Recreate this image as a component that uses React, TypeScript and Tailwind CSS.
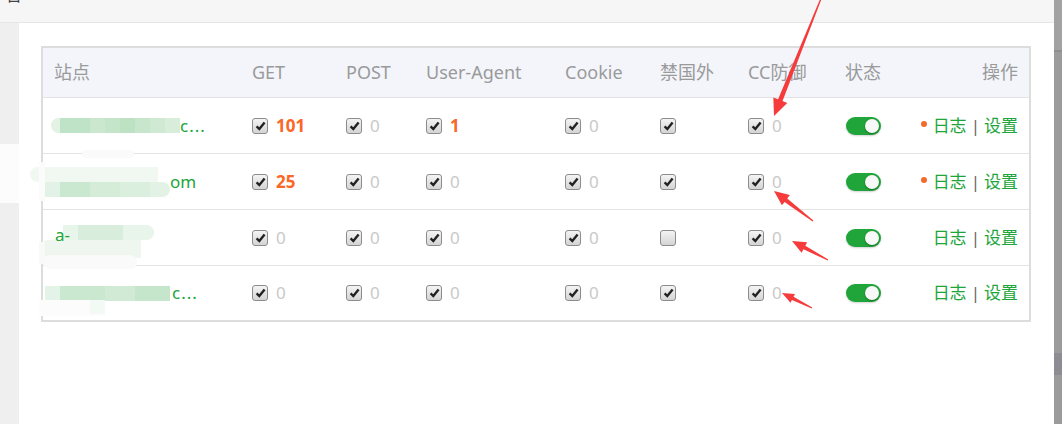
import React from "react";

type Strip = [number, string][];

const cols = "grid grid-cols-[199px_94px_80px_139px_95px_88px_97px_75px_1fr]";

interface Site {
  get: number;
  post: number;
  ua: number;
  cookie: number;
  foreign: boolean;
  cc: number;
  dot: boolean;
}

const sites: Site[] = [
  { get: 101, post: 0, ua: 1, cookie: 0, foreign: true, cc: 0, dot: true },
  { get: 25, post: 0, ua: 0, cookie: 0, foreign: true, cc: 0, dot: true },
  { get: 0, post: 0, ua: 0, cookie: 0, foreign: false, cc: 0, dot: false },
  { get: 0, post: 0, ua: 0, cookie: 0, foreign: true, cc: 0, dot: false },
];

function Check({ on = true }: { on?: boolean }) {
  return (
    <span className="inline-flex w-[16px] h-[16px] shrink-0 items-center justify-center rounded-[3px] border border-[#8c8c8c] bg-[linear-gradient(#f4f4f4,#d4d4d4)]">
      {on && (
        <svg width="11" height="10" viewBox="0 0 11 10">
          <path d="M1.6 5.4 L4.3 8 L9.6 1.6" stroke="#222" strokeWidth="2.4" fill="none" />
        </svg>
      )}
    </span>
  );
}

function Count({ n }: { n: number }) {
  return (
    <span className={n > 0 ? "font-bold text-[#fa6726]" : "text-[#c9c9c9]"}>{n}</span>
  );
}

function CheckCell({ n, on = true }: { n?: number; on?: boolean }) {
  return (
    <div className="flex items-center gap-[8px] pl-[10px]">
      <Check on={on} />
      {n !== undefined && <Count n={n} />}
    </div>
  );
}

function Blur({ parts, h = 15, className = "" }: { parts: Strip; h?: number; className?: string }) {
  return (
    <span className={`flex shrink-0 overflow-hidden ${className}`} style={{ height: h }}>
      {parts.map(([w, c], i) => (
        <span key={i} style={{ width: w, background: c }} className="h-full" />
      ))}
    </span>
  );
}

function SiteName({ row }: { row: number }) {
  if (row === 0)
    return (
      <div className="flex items-center pl-[8px] text-[#20a53a]">
        <Blur
          className="rounded-l-full"
          parts={[[9, "#e2f2e4"], [30, "#bfe3c6"], [15, "#cbe8cf"], [15, "#c4e5ca"], [15, "#bde2c3"], [15, "#c7e6cb"], [15, "#cfe9d2"], [15, "#d8eeda"]]}
        />
        <span className="tracking-[1px]">c...</span>
      </div>
    );
  if (row === 1)
    return (
      <div className="flex items-center pl-[2px] text-[#20a53a]">
        <span className="relative w-[125px] h-[30px] shrink-0">
          <span className="absolute left-[-15px] top-0 w-[128px] h-[15px] rounded-l-full bg-[#f1f8f2]" />
          <Blur
            className="absolute left-0 top-[15px] rounded-r-full"
            parts={[[15, "#e3f2e6"], [30, "#cae7cf"], [30, "#d4ecd8"], [30, "#dbefde"], [20, "#e2f2e4"]]}
          />
        </span>
        <span>om</span>
      </div>
    );
  if (row === 2)
    return (
      <div className="flex items-center pl-[12px] text-[#20a53a]">
        <span className="relative z-10 -translate-y-[3px]">a-</span>
        <span className="relative w-[91px] h-[33px] shrink-0 -ml-[7px] translate-y-[4px]">
          <Blur
            className="absolute left-0 top-0 rounded-r-full opacity-90"
            parts={[[15, "#e6f4e9"], [45, "#d5ecda"], [31, "#e6f4e8"]]}
          />
          <span className="absolute left-[-24px] top-[15px] w-[102px] h-[18px] rounded-l-full bg-[#eef6ef]" />
        </span>
      </div>
    );
  return (
    <div className="flex items-center pl-[2px] text-[#20a53a]">
      <Blur
        parts={[[15, "#e4f3e7"], [45, "#c9e8cf"], [30, "#d1ead5"], [35, "#c6e6cc"]]}
      />
      <span className="ml-[2px] tracking-[1px]">c...</span>
    </div>
  );
}

function Toggle() {
  return (
    <div className="pl-[11px]">
      <span className="flex w-[35px] h-[18px] items-center justify-end rounded-full bg-[#20a53a] pr-[2px] shadow-[0_1px_2px_rgba(0,0,0,0.18)]">
        <span className="w-[14px] h-[14px] rounded-full bg-[#f8f8f8] shadow-[0_1px_2px_rgba(0,0,0,0.3)]" />
      </span>
    </div>
  );
}

function Arrow({ tail, tip, len, wing, shaft }: { tail: [number, number]; tip: [number, number]; len: number; wing: number; shaft: number }) {
  const dx = tip[0] - tail[0];
  const dy = tip[1] - tail[1];
  const d = Math.hypot(dx, dy);
  const ux = dx / d;
  const uy = dy / d;
  const nx = -uy;
  const ny = ux;
  const bx = tip[0] - ux * len;
  const by = tip[1] - uy * len;
  const pts = [
    [tail[0] + nx * 0.6, tail[1] + ny * 0.6],
    [bx + nx * shaft, by + ny * shaft],
    [bx + nx * wing, by + ny * wing],
    tip,
    [bx - nx * wing, by - ny * wing],
    [bx - nx * shaft, by - ny * shaft],
    [tail[0] - nx * 0.6, tail[1] - ny * 0.6],
  ];
  return <polygon points={pts.map((p) => p.join(",")).join(" ")} fill="#f53b3b" />;
}

export default function App() {
  return (
    <div className="relative flex w-[1062px] h-[424px] overflow-hidden bg-white font-['Noto_Sans','Noto_Sans_CJK_SC',sans-serif]">
      <div className="flex flex-1 flex-col">
        {/* top bar */}
        <div className="relative h-[23px] shrink-0 overflow-hidden border-b border-[#e6e6e6] bg-[#f6f6f6]">
          <span className="absolute left-[6px] top-[-13px] text-[16px] leading-none text-[#444]">台</span>
        </div>

        <div className="flex flex-1">
          {/* left gutter */}
          <div className="flex w-[19px] flex-col">
            <div className="h-[121px] bg-[#efefef]" />
            <div className="h-[59px] bg-[#fcfcfc]" />
            <div className="flex-1 bg-[#efefef]" />
          </div>

          <div className="flex-1 pl-[22px] pt-[23px]">
            <div className="w-[990px] border-2 border-[#dddddd]">
              {/* header */}
              <div className={`${cols} h-[50px] items-center border-b border-[#e3e3e3] bg-[#f3f5fa] text-[18px] text-[#9a9a9a]`}>
                <div className="pl-[11px]">站点</div>
                <div className="pl-[10px]">GET</div>
                <div className="pl-[10px]">POST</div>
                <div className="pl-[10px]">User-Agent</div>
                <div className="pl-[10px]">Cookie</div>
                <div className="pl-[10px]">禁国外</div>
                <div className="pl-[10px]">CC防御</div>
                <div className="pl-[10px]">状态</div>
                <div className="pr-[11px] text-right">操作</div>
              </div>

              {sites.map((s, i) => (
                <div
                  key={i}
                  className={`${cols} items-center text-[17px] ${i < 3 ? "h-[56px] border-b border-[#e3e3e3]" : "h-[54px]"}`}
                >
                  <SiteName row={i} />
                  <CheckCell n={s.get} />
                  <CheckCell n={s.post} />
                  <CheckCell n={s.ua} />
                  <CheckCell n={s.cookie} />
                  <CheckCell on={s.foreign} />
                  <CheckCell n={s.cc} />
                  <Toggle />
                  <div className="flex items-center justify-end pr-[11px] text-[#20a53a]">
                    {s.dot && <span className="mr-[6px] h-[6px] w-[6px] -translate-y-[2px] rounded-full bg-[#f26a2c]" />}
                    <span>日志</span>
                    <span className="mx-[4px] text-[#666]">|</span>
                    <span>设置</span>
                  </div>
                </div>
              ))}
            </div>
          </div>
        </div>
      </div>

      {/* scrollbar */}
      <div className="flex w-[8px] flex-col bg-[#9b9b9b]">
        <div className="h-[52px] border-b-2 border-[#8f8f8f] bg-[#a2a2a2]" />
        <div className="h-[301px]" />
        <div className="h-[22px] bg-[#8c8c92]" />
        <div className="flex-1" />
      </div>

      {/* redaction smudges */}
      <div className="absolute left-[39px] top-[162px] h-[39px] w-[6px] bg-[#fbfbfb]" />
      <div className="absolute left-[82px] top-[150px] h-[8px] w-[52px] rounded-full bg-[#fafafa]" />
      <div className="absolute left-[39px] top-[242px] h-[22px] w-[6px] bg-[#f7faf7]" />
      <div className="absolute left-[43px] top-[255px] h-[14px] w-[94px] rounded-full bg-[#fafafa]" />
      <div className="absolute left-[39px] top-[300px] h-[16px] w-[66px] bg-[#fcfcfc]" />
      <div className="absolute left-[90px] top-[300px] h-[14px] w-[15px] bg-[#f3f9f4]" />

      {/* annotation arrows */}
      <svg className="pointer-events-none absolute left-0 top-0" width="1062" height="424">
        <Arrow tail={[822, -4]} tip={[774, 116]} len={17} wing={7.5} shaft={2.4} />
        <Arrow tail={[813, 221]} tip={[774, 191]} len={15} wing={6.5} shaft={2.2} />
        <Arrow tail={[828, 260]} tip={[792, 241]} len={14} wing={6} shaft={2} />
        <Arrow tail={[812, 308]} tip={[782, 293]} len={12} wing={5} shaft={1.8} />
      </svg>
    </div>
  );
}
